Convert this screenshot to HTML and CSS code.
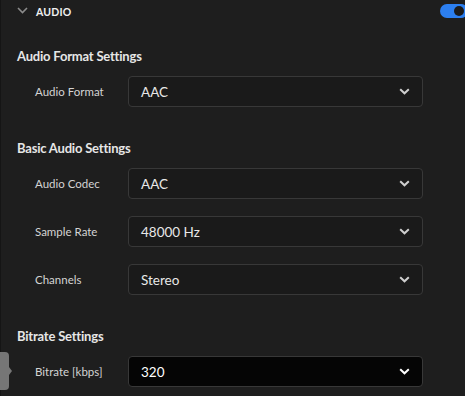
FILE: index.html
```html
<!DOCTYPE html>
<html>
<head>
<meta charset="utf-8">
<link rel="stylesheet" href="styles.css">
</head>
<body>
<div class="panel">
  <div class="header">
    <svg class="hchev" width="11" height="7" viewBox="0 0 11 7"><path d="M1 1 L5.5 5.5 L10 1" fill="none" stroke="#8c8c8c" stroke-width="1.6"/></svg>
    <span class="htitle">AUDIO</span>
    <span class="toggle"><span class="knob"></span></span>
  </div>

  <div class="section">
    <div class="stitle">Audio Format Settings</div>
    <div class="row">
      <span class="label">Audio Format</span>
      <div class="select"><span>AAC</span><svg class="chev" width="11" height="7" viewBox="0 0 11 7"><path d="M1.2 1.2 L5.5 5.3 L9.8 1.2" fill="none" stroke="#cfcfcf" stroke-width="2"/></svg></div>
    </div>
  </div>

  <div class="section">
    <div class="stitle">Basic Audio Settings</div>
    <div class="row">
      <span class="label">Audio Codec</span>
      <div class="select"><span>AAC</span><svg class="chev" width="11" height="7" viewBox="0 0 11 7"><path d="M1.2 1.2 L5.5 5.3 L9.8 1.2" fill="none" stroke="#cfcfcf" stroke-width="2"/></svg></div>
    </div>
    <div class="row">
      <span class="label">Sample Rate</span>
      <div class="select"><span>48000 Hz</span><svg class="chev" width="11" height="7" viewBox="0 0 11 7"><path d="M1.2 1.2 L5.5 5.3 L9.8 1.2" fill="none" stroke="#cfcfcf" stroke-width="2"/></svg></div>
    </div>
    <div class="row">
      <span class="label">Channels</span>
      <div class="select"><span>Stereo</span><svg class="chev" width="11" height="7" viewBox="0 0 11 7"><path d="M1.2 1.2 L5.5 5.3 L9.8 1.2" fill="none" stroke="#cfcfcf" stroke-width="2"/></svg></div>
    </div>
  </div>

  <div class="section">
    <div class="stitle">Bitrate Settings</div>
    <div class="row">
      <span class="label">Bitrate [kbps]</span>
      <div class="select active"><span>320</span><svg class="chev" width="11" height="7" viewBox="0 0 11 7"><path d="M1.2 1.2 L5.5 5.3 L9.8 1.2" fill="none" stroke="#ffffff" stroke-width="2"/></svg></div>
    </div>
  </div>

  <div class="tab"></div>
</div>
</body>
</html>
```
FILE: styles.css
```css
html, body {
  margin: 0;
  padding: 0;
  background: #1e1e1e;
  overflow: hidden;
}
body {
  font-family: Lato, "Open Sans", sans-serif;
  color: #dcdcdc;
  width: 465px;
  height: 396px;
}
.panel {
  position: relative;
  height: 396px;
  border-left: 1px solid #151515;
  box-sizing: border-box;
}
.header {
  display: flex;
  align-items: center;
  height: 26px;
  padding-left: 16px;
  box-sizing: border-box;
  padding-bottom: 2px;
}
.hchev {
  display: block;
  margin-top: -3px;
}
.htitle {
  margin-left: 8px;
  font-size: 10.5px;
  font-weight: 700;
  color: #f0f0f0;
  letter-spacing: 0.2px;
}
.toggle {
  margin-left: auto;
  margin-right: -3px;
  width: 28px;
  height: 14px;
  border-radius: 7px;
  background: #2c7ff0;
  position: relative;
  margin-top: -3px;
}
.knob {
  position: absolute;
  right: 4px;
  top: 2px;
  width: 10px;
  height: 10px;
  border-radius: 50%;
  background: #1b1b1b;
}
.section {
  padding-left: 16px;
  padding-right: 42px;
  margin-top: 20px;
}
.section + .section {
  margin-top: 31px;
}
.stitle {
  font-size: 13px;
  letter-spacing: -0.2px;
  font-weight: 700;
  color: #e6e6e6;
  line-height: 20px;
  margin-bottom: 10px;
}
.row {
  display: flex;
  align-items: center;
  height: 31px;
}
.row + .row {
  margin-top: 17px;
}
.label {
  width: 111px;
  box-sizing: border-box;
  padding-left: 18px;
  font-size: 11.5px;
  color: #d4d4d4;
}
.select {
  flex: 1;
  height: 31px;
  box-sizing: border-box;
  border: 1px solid #383838;
  border-radius: 4px;
  background: #1a1a1a;
  display: flex;
  align-items: center;
  padding-left: 12px;
  padding-right: 12px;
  font-size: 13.5px;
  color: #e8e8e8;
}
.select .chev {
  margin-left: auto;
}
.select.active {
  background: #050505;
  color: #ffffff;
}
.tab {
  position: absolute;
  left: -1px;
  top: 352px;
  width: 9px;
  height: 38px;
  background: #767676;
  border-radius: 0 4px 4px 0;
}
.tab::after {
  content: "";
  position: absolute;
  right: -3px;
  top: 15px;
  border-top: 4px solid transparent;
  border-bottom: 4px solid transparent;
  border-left: 3px solid #767676;
}
```
